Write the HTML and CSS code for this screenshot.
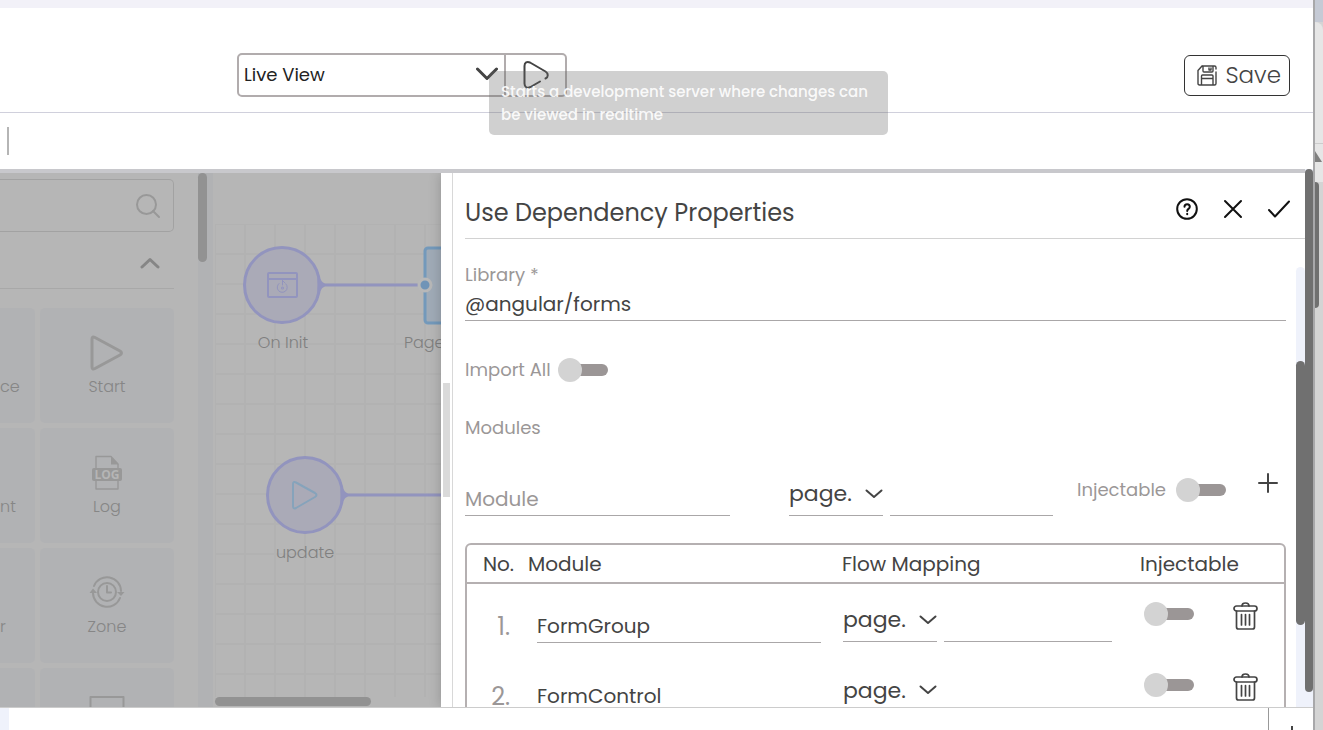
FILE: index.html
```html
<!DOCTYPE html>
<html lang="en">
  <head>
    <meta charset="UTF-8" />
    <meta name="viewport" content="width=device-width, initial-scale=1.0" />
    <title>Flow Editor</title>
    <link rel="stylesheet" href="styles.css">
  </head>
  <body>
    <div class="app">
      <div class="top-strip"></div>

      <header class="header">
        <div class="run-group">
          <div class="select-wrap live-view">
            <select aria-label="Run mode">
              <option>Live View</option>
            </select>
            <svg width="22" height="14" viewBox="0 0 22 14"><path d="M1.500 2L11 11.500L20.500 2" /></svg>
          </div>
          <button class="play" type="button" aria-label="Run">
            <svg width="28" height="32" viewBox="0 0 28 32"><path d="M18 22.500L8.500 28C5 29.800 2.500 28 2.500 24.500V7C2.500 3.500 5 2 8 3.500L23.500 12.500C26.500 14.500 26.500 18 23.500 19.500" /></svg>
          </button>
          <div class="tooltip" role="tooltip">Starts a development server where changes can be viewed in realtime</div>
        </div>
        <button class="save" type="button">
          <svg width="20" height="21" viewBox="0 0 20 21">
            <path d="M5 1H17.500Q19 1 19 2.500V4M19 7V18.500Q19 20 17.500 20H2.500Q1 20 1 18.500V5.500L5 1M6 1V6Q6 7 7 7H15Q16 7 16 6V1M12 3V5H14V3M4.500 20V11Q4.500 10 5.500 10H15Q16 10 16 11V20M4.500 13.500H16" />
          </svg>
          Save
        </button>
      </header>

      <div class="tab-bar"><span class="caret"></span></div>

      <main class="workspace">
        <div class="stage">
          <aside class="sidebar">
            <div class="palette">
              <div class="search">
                <input type="text" aria-label="Search nodes" />
                <svg width="26" height="26" viewBox="0 0 26 26"><circle cx="11.500" cy="11.500" r="9.500" /><path d="M18 18L24 24" /></svg>
              </div>
              <button class="group-toggle" type="button" aria-label="Collapse group">
                <svg width="20" height="12" viewBox="0 0 20 12"><path d="M2 10L10 2.500L18 10" /></svg>
              </button>
              <div class="tiles">
                <div class="tile cut"><span>ce</span></div>
                <div class="tile">
                  <svg width="36" height="36" viewBox="0 0 36 36"><path class="thick" d="M3 4Q3 1 6 2.500L31 16Q34 18 31 20L6 33.500Q3 35 3 32Z" /></svg>
                  <span>Start</span>
                </div>
                <div class="tile cut"><span>nt</span></div>
                <div class="tile">
                  <svg width="36" height="36" viewBox="0 0 36 36">
                    <path d="M7 13V1.500H22L29 9V13M7 26V34H29V26" />
                    <path class="solid" d="M22 1.500L29.500 9.500H22Z" />
                    <rect class="solid" x="3" y="13" width="30" height="13" rx="2" />
                    <text x="18" y="23.500">LOG</text>
                  </svg>
                  <span>Log</span>
                </div>
                <div class="tile cut"><span>r</span></div>
                <div class="tile">
                  <svg width="36" height="36" viewBox="0 0 36 36">
                    <circle class="mid" cx="18" cy="17" r="9" />
                    <path class="mid" d="M18 11V17.500H22M5 11A14 14 0 0 1 32 16M31 23A14 14 0 0 1 4 18" />
                    <path class="solid" d="M28 17H35.500L32 21ZM0.500 18H8L4 13.500Z" />
                  </svg>
                  <span>Zone</span>
                </div>
                <div class="tile cut"></div>
                <div class="tile">
                  <svg width="36" height="36" viewBox="0 0 36 36"><rect class="mid" x="1.500" y="2" width="33" height="24" /></svg>
                </div>
              </div>
            </div>
            <div class="scroll-track"><div class="scroll-thumb"></div></div>
          </aside>

          <section class="canvas">
            <div class="grid"></div>
            <svg class="flow" width="228" height="524" viewBox="0 0 228 524">
              <!-- page node -->
              <rect class="page-node" x="212" y="75" width="80" height="75" rx="3" />
              <!-- links -->
              <path class="link" d="M106 112H204M128 322H228" />
              <circle class="port" cx="212" cy="112" r="6" />
              <!-- on init -->
              <circle class="event-node" cx="69" cy="112" r="37.500" />
              <path class="arrow" d="M105 100C106 106 108 109 113 112C108 115 106 118 105 124Z" />
              <g class="init-icon">
                <rect x="55" y="100" width="29" height="24" rx="1" />
                <path d="M55 106H84" />
                <path class="thin" d="M66 110.500A5 5 0 1 0 73 111M69.500 107.500V112M69.500 107.500L72 110" />
                <circle cx="69.500" cy="115" r="0.500" />
              </g>
              <text x="70" y="175">On Init</text>
              <text class="page-name" x="191" y="175">Page</text>
              <!-- update -->
              <circle class="event-node" cx="92" cy="322" r="37.500" />
              <path class="arrow" d="M128 310C129 316 131 319 136 322C131 325 129 328 128 334Z" />
              <path class="start-icon" d="M80 311Q80 308 83 309.500L102 320Q105 322 102 324L83 335Q80 336.500 80 333Z" />
              <text x="92" y="385">update</text>
            </svg>
            <div class="h-thumb"></div>
          </section>

          <section class="panel">
            <div class="resizer"><span></span></div>
            <div class="panel-main">
              <div class="panel-head">
                <h2>Use Dependency Properties</h2>
                <button type="button" aria-label="Help">
                  <svg width="22" height="22" viewBox="0 0 22 22"><circle cx="11" cy="11" r="9.800" /><path d="M8.500 8.800C8.500 5.300 13.800 5.300 13.800 8.800C13.800 11 11.200 10.800 11.200 13M11.200 15.800V16.200" /></svg>
                </button>
                <button type="button" aria-label="Close">
                  <svg width="22" height="22" viewBox="0 0 22 22"><path d="M3 3L19 19M19 3L3 19" /></svg>
                </button>
                <button type="button" aria-label="Apply">
                  <svg width="22" height="22" viewBox="0 0 22 22"><path d="M1 12L7 18.500L21 3.500" /></svg>
                </button>
              </div>

              <div class="panel-body">
                <form class="form">
                  <label class="caption" for="library">Library *</label>
                  <input class="line-input library" id="library" type="text" value="@angular/forms" />

                  <div class="toggle-row">
                    <label class="caption" for="import-all">Import All</label>
                    <input class="toggle" id="import-all" type="checkbox" />
                  </div>

                  <p class="caption modules">Modules</p>

                  <div class="add-row">
                    <input class="line-input" type="text" placeholder="Module" aria-label="Module" />
                    <div class="mapping">
                      <div class="select-wrap">
                        <select aria-label="Flow scope"><option>page.</option></select>
                        <svg width="18" height="10" viewBox="0 0 18 10"><path d="M1.500 1.500L9 8L16.500 1.500" /></svg>
                      </div>
                      <input class="line-input" type="text" aria-label="Flow property" />
                    </div>
                    <div class="toggle-row">
                      <label class="caption" for="injectable">Injectable</label>
                      <input class="toggle" id="injectable" type="checkbox" />
                    </div>
                    <button class="add" type="button" aria-label="Add module">
                      <svg width="20" height="20" viewBox="0 0 20 20"><path d="M10 1V19M1 10H19" /></svg>
                    </button>
                  </div>

                  <div class="table-box">
                    <table>
                      <colgroup>
                        <col class="col-no" />
                        <col />
                        <col class="col-flow" />
                        <col class="col-inject" />
                        <col class="col-delete" />
                      </colgroup>
                      <thead>
                        <tr>
                          <th class="no">No.</th>
                          <th>Module</th>
                          <th>Flow Mapping</th>
                          <th colspan="2">Injectable</th>
                        </tr>
                      </thead>
                      <tbody>
                        <tr>
                          <td class="index">1.</td>
                          <td class="name"><input class="line-input" type="text" value="FormGroup" aria-label="Module 1" /></td>
                          <td class="flow-map">
                            <div class="mapping">
                              <div class="select-wrap">
                                <select aria-label="Flow scope 1"><option>page.</option></select>
                                <svg width="18" height="10" viewBox="0 0 18 10"><path d="M1.500 1.500L9 8L16.500 1.500" /></svg>
                              </div>
                              <input class="line-input" type="text" aria-label="Flow property 1" />
                            </div>
                          </td>
                          <td class="inject"><input class="toggle" type="checkbox" aria-label="Injectable 1" /></td>
                          <td>
                            <button class="delete" type="button" aria-label="Delete FormGroup">
                              <svg width="26" height="28" viewBox="0 0 26 28"><rect x="1" y="4" width="23" height="5" rx="2.500" /><path d="M9 4Q9 1 12.500 1Q16 1 16 4M3.500 9V25Q3.500 27 5.500 27H19.500Q21.500 27 21.500 25V9M8.500 12.500V23M12.500 12.500V23M16.500 12.500V23" /></svg>
                            </button>
                          </td>
                        </tr>
                        <tr>
                          <td class="index">2.</td>
                          <td class="name"><input class="line-input" type="text" value="FormControl" aria-label="Module 2" /></td>
                          <td class="flow-map">
                            <div class="mapping">
                              <div class="select-wrap">
                                <select aria-label="Flow scope 2"><option>page.</option></select>
                                <svg width="18" height="10" viewBox="0 0 18 10"><path d="M1.500 1.500L9 8L16.500 1.500" /></svg>
                              </div>
                              <input class="line-input" type="text" aria-label="Flow property 2" />
                            </div>
                          </td>
                          <td class="inject"><input class="toggle" type="checkbox" aria-label="Injectable 2" /></td>
                          <td>
                            <button class="delete" type="button" aria-label="Delete FormControl">
                              <svg width="26" height="28" viewBox="0 0 26 28"><rect x="1" y="4" width="23" height="5" rx="2.500" /><path d="M9 4Q9 1 12.500 1Q16 1 16 4M3.500 9V25Q3.500 27 5.500 27H19.500Q21.500 27 21.500 25V9M8.500 12.500V23M12.500 12.500V23M16.500 12.500V23" /></svg>
                            </button>
                          </td>
                        </tr>
                      </tbody>
                    </table>
                  </div>
                </form>
                <div class="panel-scroll"><div class="panel-thumb"></div></div>
              </div>
            </div>
          </section>
        </div>
        <div class="page-scroll"><div class="page-thumb"></div></div>
      </main>

      <footer class="footer">
        <span class="footer-edge"></span>
        <button class="footer-add" type="button" aria-label="Expand">
          <svg width="14" height="14" viewBox="0 0 14 14"><path d="M7 0V14M0 7H14" /></svg>
        </button>
      </footer>
    </div>

    <!-- edge of the browser window behind the editor -->
    <div class="behind">
      <div class="behind-top"></div>
      <div class="behind-tab">
        <svg width="8" height="12" viewBox="0 0 8 12"><path d="M0 0L7 11H0Z" /></svg>
      </div>
      <div class="behind-thumb"></div>
    </div>
  </body>
</html>
```
FILE: styles.css
```css
* {
  padding: 0;
  margin: 0;
  box-sizing: border-box;
}
body {
  display: flex;
  height: 100vh;
  overflow: hidden;
  background-color: #ffffff;
  color: #444444;
  font-family: Poppins, Inter, sans-serif;
}
button,
input,
select {
  font: inherit;
  color: inherit;
  background: none;
  border: none;
  border-radius: 0;
  outline: none;
  appearance: none;
}
button {
  cursor: pointer;
}
svg {
  display: block;
  flex-shrink: 0;
  fill: none;
  stroke: #444444;
  stroke-width: 2;
  stroke-linecap: round;
  stroke-linejoin: round;
}
.app {
  flex: 1;
  min-width: 0;
  display: flex;
  flex-direction: column;
}
.top-strip {
  height: 8px;
  background-color: #f2f1f8;
}

/* header */
.header {
  display: flex;
  justify-content: space-between;
  align-items: center;
  padding: 45px 23px 15px 237px;
  border-bottom: 1px solid #d0d0dc;
}
.run-group {
  position: relative;
  display: flex;
  width: 330px;
  height: 44px;
  border: 2px solid #b1acad;
  border-radius: 5px;
}
.select-wrap {
  display: grid;
  align-items: center;
}
.select-wrap select,
.select-wrap svg {
  grid-area: 1 / 1;
}
.select-wrap select {
  width: 100%;
  height: 100%;
}
.select-wrap svg {
  justify-self: end;
  pointer-events: none;
}
.live-view {
  flex: 1;
  padding: 0 6px 2px 5px;
  font-size: 18px;
  color: #222222;
}
.live-view svg {
  stroke-width: 3;
}
.play {
  width: 61px;
  padding-left: 16px;
  border-left: 2px solid #b1acad;
}
.tooltip {
  position: absolute;
  top: 16px;
  left: 250px;
  width: 399px;
  padding: 9px 12px;
  border-radius: 5px;
  background-color: rgba(100, 100, 100, 0.3);
  color: rgba(255, 255, 255, 0.9);
  font-size: 15px;
  font-weight: 500;
  line-height: 23px;
}
.save {
  display: flex;
  align-items: center;
  gap: 8px;
  height: 41px;
  padding: 0 8px 0 12px;
  border: 1px solid #333333;
  border-radius: 6px;
  font-size: 23px;
  font-weight: 300;
}
.save svg {
  stroke-width: 1.4;
}
.tab-bar {
  height: 56px;
  padding: 14px 7px;
}
.caret {
  display: block;
  width: 2px;
  height: 28px;
  background-color: #b5b5b5;
}

/* workspace */
.workspace {
  flex: 1;
  min-height: 0;
  display: flex;
}
.stage {
  flex: 1;
  min-width: 0;
  display: flex;
  overflow: hidden;
  border-top: 4px solid #c8c8cc;
}
.sidebar {
  width: 213px;
  flex-shrink: 0;
  display: flex;
  background-color: #b6b6b6;
  color: #868686;
}
.palette {
  flex: 1;
  min-width: 0;
  padding-right: 24px;
}
.palette svg {
  stroke: #989898;
}
.search {
  display: flex;
  align-items: center;
  height: 53px;
  margin-top: 6px;
  padding-right: 12px;
  border: 1px solid #a2a2a2;
  border-left: none;
  border-radius: 0 5px 5px 0;
}
.search input {
  flex: 1;
  min-width: 0;
}
.group-toggle {
  display: flex;
  justify-content: flex-end;
  width: 100%;
  height: 57px;
  padding: 25px 14px 0 0;
  border-bottom: 1px solid #a8a8a8;
}
.group-toggle svg {
  stroke: #868686;
  stroke-width: 3;
}
.tiles {
  display: grid;
  grid-template-columns: 35px 1fr;
  grid-auto-rows: 115px;
  gap: 5px;
  margin-top: 19px;
}
.tile {
  display: flex;
  flex-direction: column;
  align-items: center;
  gap: 4px;
  padding-top: 27px;
  border-radius: 5px;
  background-color: #b1b2b4;
  font-size: 16px;
  font-weight: 300;
  line-height: 24px;
}
.tile.cut {
  align-items: flex-start;
  padding-top: 67px;
  border-radius: 0 5px 5px 0;
}
.tile .thick {
  stroke-width: 3;
}
.tile .mid {
  stroke-width: 2;
}
.tile .solid {
  fill: #989898;
  stroke: none;
}
.tile text {
  fill: #b5b5b5;
  stroke: none;
  font-family: "Open Sans", sans-serif;
  font-size: 12px;
  font-weight: 700;
  text-anchor: middle;
}
.tile svg path:not([class]) {
  stroke-width: 1.4;
}
.scroll-track {
  width: 15px;
  background-color: #b1b2b4;
}
.scroll-thumb {
  width: 9px;
  height: 89px;
  border-radius: 5px;
  background-color: #929292;
}

/* flow canvas */
.canvas {
  position: relative;
  width: 228px;
  flex-shrink: 0;
  display: flex;
  flex-direction: column;
  overflow: hidden;
  padding: 51px 0 1px 2px;
  background-color: #b6b6b6;
}
.grid {
  flex: 1;
  border-left: 1px solid #b2b2b2;
  border-top: 1px solid #b2b2b2;
  background-image: linear-gradient(to right, transparent 28px, #b2b2b2 28px),
    linear-gradient(transparent 28px, #b2b2b2 28px);
  background-size: 30px 30px;
}
.flow {
  position: absolute;
  top: 0;
  left: 0;
}
.flow .page-node {
  fill: #a0abb7;
  stroke: #7399bb;
  stroke-width: 3;
}
.flow .link {
  stroke: #9294be;
  stroke-width: 3;
}
.flow .port {
  fill: #7094b7;
  stroke: #b8b8b8;
  stroke-width: 3;
}
.flow .event-node {
  fill: #aaaab7;
  stroke: #9294be;
  stroke-width: 3;
}
.flow .arrow {
  fill: #9294be;
  stroke: #9294be;
  stroke-width: 1;
}
.flow .init-icon {
  stroke: #9294be;
}
.flow .thin {
  stroke-width: 1;
}
.flow .start-icon {
  stroke: #86a3bb;
}
.flow text {
  fill: #808080;
  stroke: none;
  font-size: 16px;
  font-weight: 300;
  text-anchor: middle;
}
.flow .page-name {
  text-anchor: start;
}
.h-thumb {
  width: 156px;
  height: 9px;
  border-radius: 5px;
  background-color: #929292;
}

/* properties panel */
.panel {
  position: relative;
  flex: 1;
  min-width: 0;
  display: flex;
  background-color: #ffffff;
  box-shadow: 0 0 12px rgba(0, 0, 0, 0.2);
}
.resizer {
  width: 12px;
  padding: 210px 2px 0;
  border-right: 1px solid #d8d8d8;
}
.resizer span {
  display: block;
  height: 114px;
  background-color: #dadada;
}
.panel-main {
  flex: 1;
  min-width: 0;
  display: flex;
  flex-direction: column;
  padding-left: 12px;
}
.panel-head {
  display: flex;
  align-items: center;
  gap: 24px;
  height: 66px;
  padding: 14px 15px 0 0;
  border-bottom: 1px solid #d2d2d2;
}
.panel-head h2 {
  flex: 1;
  font-size: 24px;
  font-weight: 400;
}
.panel-head svg {
  margin-bottom: 8px;
  stroke: #111111;
}
.panel-body {
  flex: 1;
  min-height: 0;
  display: flex;
  overflow: hidden;
  gap: 10px;
}
.form {
  flex: 1;
  min-width: 0;
  padding-top: 24px;
}
.caption {
  color: #9b9797;
  font-size: 18px;
  line-height: 24px;
}
.line-input {
  display: block;
  width: 100%;
  min-width: 0;
  height: 34px;
  border-bottom: 1px solid #aaa7a8;
  font-size: 20px;
}
.line-input::placeholder {
  color: #9b9797;
  opacity: 1;
}
.form > .caption {
  display: block;
}
.toggle-row {
  display: flex;
  align-items: center;
  gap: 7px;
}
.form > .toggle-row {
  margin-top: 37px;
}
.toggle {
  display: flex;
  align-items: center;
  width: 50px;
  height: 24px;
  cursor: pointer;
}
.toggle::before {
  content: "";
  z-index: 1;
  width: 24px;
  height: 24px;
  border-radius: 50%;
  background-color: #d3d3d3;
}
.toggle::after {
  content: "";
  flex: 1;
  height: 12px;
  margin-left: -8px;
  border-radius: 6px;
  background-color: #9b9696;
}
.modules {
  margin-top: 34px;
}
.add-row {
  display: grid;
  grid-template-columns: 265px 1fr 149px 28px;
  column-gap: 24px;
  align-items: end;
  margin-top: 10px;
  padding-right: 8px;
}
.add-row .mapping {
  justify-self: end;
  width: 264px;
}
.add-row .toggle-row {
  height: 52px;
  justify-content: space-between;
}
.add-row .add {
  height: 66px;
  padding-left: 8px;
}
.mapping {
  display: flex;
  align-items: flex-end;
  gap: 7px;
}
.mapping .select-wrap {
  width: 94px;
  height: 44px;
  flex-shrink: 0;
  border-bottom: 1px solid #aaa7a8;
  font-size: 22px;
}
.table-box {
  margin-top: 27px;
  border: 2px solid #b5b0b1;
  border-radius: 6px;
}
table {
  width: 100%;
  table-layout: fixed;
  border-collapse: collapse;
}
.col-no {
  width: 61px;
}
.col-flow {
  width: 298px;
}
.col-inject {
  width: 90px;
}
.col-delete {
  width: 54px;
}
th {
  height: 38px;
  border-bottom: 2px solid #b5b0b1;
  font-size: 20px;
  font-weight: 400;
  text-align: left;
}
th.no {
  padding-left: 16px;
}
td {
  height: 71px;
  vertical-align: middle;
}
td.index {
  padding: 14px 18px 0 0;
  color: #9b9797;
  font-size: 24px;
  font-weight: 400;
  text-align: right;
}
td.name {
  padding: 14px 21px 0 9px;
}
td.flow-map {
  padding: 2px 28px 0 1px;
}
td.inject {
  padding-left: 4px;
}
td .toggle {
  margin-bottom: 10px;
}
.delete {
  display: block;
  padding-left: 3px;
  margin-bottom: 6px;
}
.delete svg {
  stroke-width: 1.7;
}

/* scrollbars */
.panel-scroll {
  width: 9px;
  margin-top: 28px;
  padding-top: 94px;
  border-radius: 5px 5px 0 0;
  background-color: #eff2fb;
}
.panel-thumb {
  height: 264px;
  border-radius: 5px;
  background-color: #707070;
}
.page-scroll {
  width: 8px;
  background-color: #eff2fb;
}
.page-thumb {
  height: calc(100% - 15px);
  border-radius: 4px;
  background-color: #707070;
}

/* footer */
.footer {
  display: flex;
  justify-content: space-between;
  height: 23px;
  border-top: 1px solid #cccccc;
}
.footer-edge {
  width: 9px;
  background-color: #eff2fb;
}
.footer-add {
  width: 45px;
  padding: 18px 0 0 16px;
  overflow: hidden;
  border-left: 1px solid #999999;
}

/* window behind */
.behind {
  width: 10px;
  flex-shrink: 0;
  display: flex;
  flex-direction: column;
  border-left: 2px solid #a8a8aa;
  background-color: #d4d4d4;
}
.behind-top {
  height: 22px;
  background-color: #c5cad5;
}
.behind-tab {
  height: 160px;
  padding-top: 129px;
  border-radius: 0 8px 0 0;
  background: linear-gradient(transparent 121px, #cccccc 121px, #cccccc 122px, transparent 122px) #e6e6e6;
}
.behind-tab svg {
  fill: #808080;
  stroke: none;
}
.behind-thumb {
  width: 4px;
  height: 126px;
  border-radius: 0 4px 4px 0;
  background-color: #707070;
}
```
